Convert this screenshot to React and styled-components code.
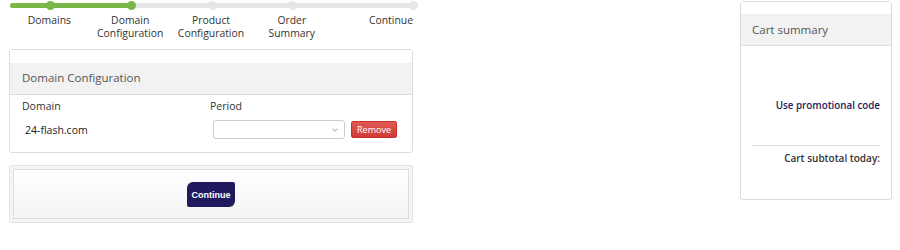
import React from 'react'
import styled, { createGlobalStyle } from 'styled-components'

const GlobalStyle = createGlobalStyle`
  body {
    margin: 0;
    background: #fff;
    font-family: "Open Sans", "Liberation Sans", sans-serif;
    color: #333;
  }
`

const steps = [
  { label: 'Domains', done: true },
  { label: 'Domain\nConfiguration', done: true },
  { label: 'Product\nConfiguration', done: false },
  { label: 'Order\nSummary', done: false },
  { label: 'Continue', done: false },
]

function App() {
  return (
    <Page>
      <GlobalStyle />
      <Main>
        <Progress>
          <Track>
            <Fill style={{ width: '30%' }} />
            {steps.map((s, i) => (
              <Dot
                key={i}
                $done={s.done}
                style={{ left: i === steps.length - 1 ? 'calc(100% - 4px)' : `calc(${(i * 2 + 1) * 10}% - 4px)` }}
              />
            ))}
          </Track>
          <Labels>
            {steps.map((s, i) => (
              <Label key={i} $last={i === steps.length - 1}>{s.label}</Label>
            ))}
          </Labels>
        </Progress>

        <Panel>
          <PanelHeading>Domain Configuration</PanelHeading>
          <PanelBody>
            <Row>
              <ColHead>Domain</ColHead>
              <ColHead>Period</ColHead>
            </Row>
            <Row $item>
              <DomainName>24-flash.com</DomainName>
              <Controls>
                <Select>
                  <Chevron viewBox="0 0 10 6">
                    <path d="M1 1l4 4 4-4" fill="none" stroke="#777" strokeWidth="1.3" />
                  </Chevron>
                </Select>
                <RemoveButton>Remove</RemoveButton>
              </Controls>
            </Row>
          </PanelBody>
        </Panel>

        <Well>
          <WellInner>
            <ContinueButton>Continue</ContinueButton>
          </WellInner>
        </Well>
      </Main>

      <Sidebar>
        <SideHeading>Cart summary</SideHeading>
        <SideBody>
          <PromoLink>Use promotional code</PromoLink>
          <Divider />
          <Subtotal>Cart subtotal today:</Subtotal>
        </SideBody>
      </Sidebar>
    </Page>
  )
}

const Page = styled.div`
  display: flex;
  justify-content: space-between;
  align-items: flex-start;
  padding: 1px 8px 0 9px;
  width: 900px;
  box-sizing: border-box;
`

const Main = styled.div`
  width: 404px;
`

const Progress = styled.div`
  padding-top: 2px;
`

const Track = styled.div`
  position: relative;
  height: 5px;
  margin-left: 1px;
  background: #e6e6e6;
  border-radius: 3px;
`

const Fill = styled.div`
  height: 100%;
  background: #7ab648;
  border-radius: 3px;
`

const Dot = styled.span`
  position: absolute;
  top: -2px;
  width: 9px;
  height: 9px;
  border-radius: 50%;
  background: ${p => (p.$done ? '#7ab648' : '#e6e6e6')};
`

const Labels = styled.div`
  display: grid;
  grid-template-columns: repeat(5, 1fr);
  margin-top: 6px;
`

const Label = styled.div`
  white-space: pre-line;
  font-size: 10.4px;
  line-height: 13px;
  color: #333;
  text-align: ${p => (p.$last ? 'right' : 'center')};
`

const Panel = styled.div`
  margin-top: 9px;
  border: 1px solid #ddd;
  border-radius: 3px;
`

const PanelHeading = styled.div`
  padding: 21px 12px 9px;
  font-size: 11.5px;
  line-height: 14px;
  color: #555;
  background: linear-gradient(#fff 13px, #f2f2f2 13px);
  border-bottom: 1px solid #ddd;
`

const PanelBody = styled.div`
  padding: 5px 12px 13px;
`

const Row = styled.div`
  display: flex;
  align-items: center;
  margin-top: ${p => (p.$item ? '7px' : '0')};
`

const ColHead = styled.div`
  width: 188px;
  font-size: 10.5px;
  line-height: 13px;
  color: #333;
`

const DomainName = styled.div`
  width: 188px;
  padding-left: 3px;
  font-size: 10.5px;
  color: #222;
`

const Controls = styled.div`
  display: flex;
  align-items: center;
  gap: 6px;
`

const Select = styled.div`
  position: relative;
  width: 130px;
  height: 17px;
  border: 1px solid #ccc;
  border-radius: 3px;
  background: #fff;
`

const Chevron = styled.svg`
  position: absolute;
  right: 6px;
  top: 7px;
  width: 6px;
  height: 4px;
`

const RemoveButton = styled.button`
  width: 46px;
  height: 17px;
  padding: 0;
  border: 1px solid #c9302c;
  border-radius: 2px;
  background: linear-gradient(#e05a55, #cf3b36);
  color: #fff;
  font-family: inherit;
  font-size: 9px;
`

const Well = styled.div`
  margin-top: 12px;
  border: 1px solid #e3e3e3;
  background: #f5f5f5;
  padding: 3px;
  border-radius: 2px;
`

const WellInner = styled.div`
  display: flex;
  justify-content: center;
  padding: 12px 0 11px;
  border: 1px solid #ddd;
  background: linear-gradient(#fff, #f4f4f4);
`

const ContinueButton = styled.button`
  width: 48px;
  height: 25px;
  padding: 0;
  border: none;
  border-radius: 6px 2px 6px 2px;
  background: #1f1a5e;
  color: #fff;
  font-family: "Liberation Sans", Arial, sans-serif;
  font-weight: bold;
  font-size: 9px;
`

const Sidebar = styled.div`
  width: 150px;
  border: 1px solid #ddd;
  border-radius: 3px;
  height: 197px;
`

const SideHeading = styled.div`
  padding: 21px 11px 8px;
  font-size: 11.5px;
  line-height: 14px;
  color: #555;
  background: linear-gradient(#fff 12px, #f2f2f2 12px);
  border-bottom: 1px solid #ddd;
`

const SideBody = styled.div`
  padding: 53px 11px 0;
  text-align: right;
`

const PromoLink = styled.div`
  font-size: 9.8px;
  font-weight: 600;
  color: #1f1a5e;
`

const Divider = styled.div`
  margin-top: 33px;
  border-top: 1px solid #ddd;
`

const Subtotal = styled.div`
  margin-top: 5px;
  font-size: 10px;
  font-weight: 600;
  color: #333;
`

export default App
